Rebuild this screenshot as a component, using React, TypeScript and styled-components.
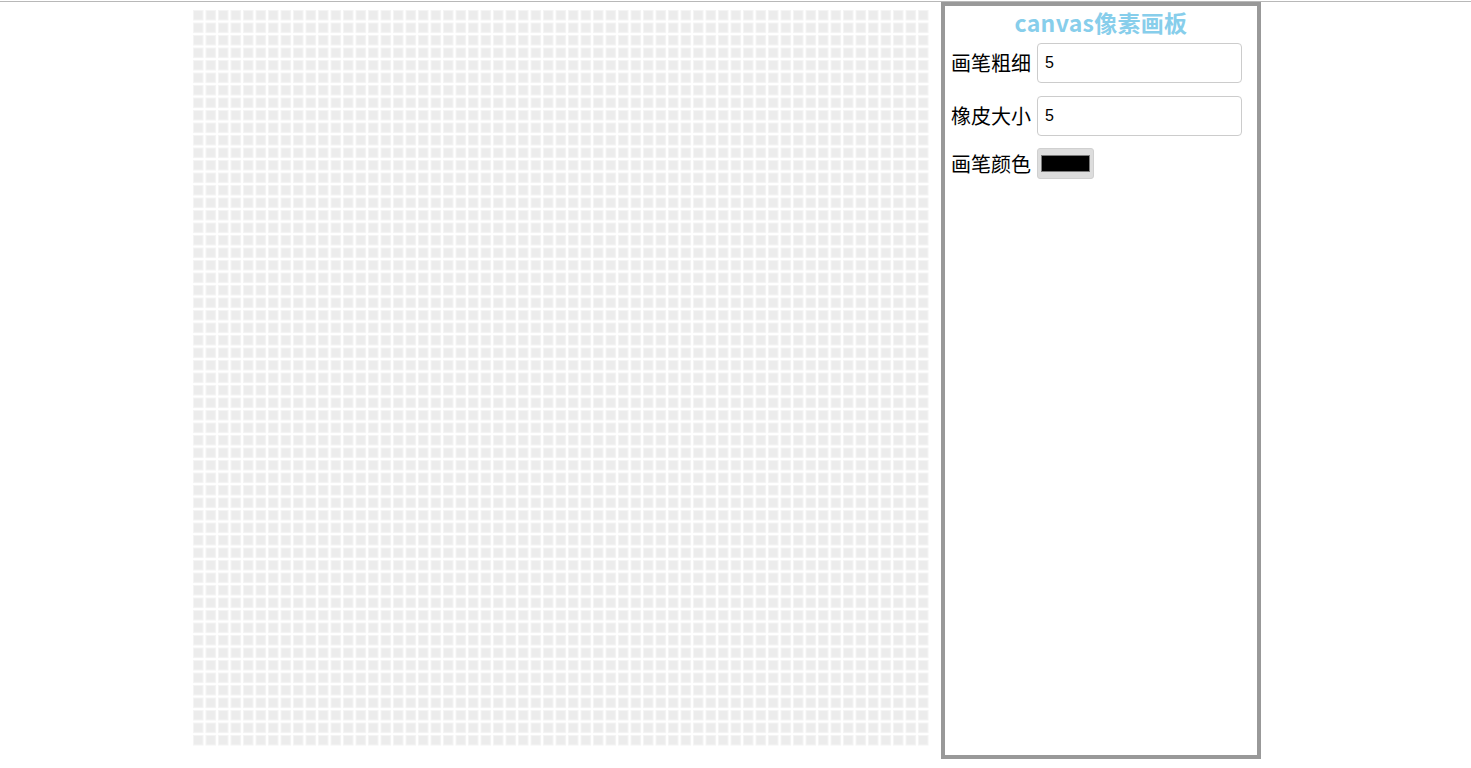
import React from 'react';
import styled, { createGlobalStyle } from 'styled-components';

const GlobalStyle = createGlobalStyle`
  html, body {
    margin: 0;
    padding: 0;
    background: #ffffff;
  }
  body {
    font-family: "Noto Sans CJK SC", "Noto Sans", sans-serif;
  }
`;

const Page = styled.div`
  margin-top: 1px;
  border-top: 1px solid #b8b8b8;
  display: flex;
  align-items: flex-start;
  padding-left: 193px;
  gap: 12px;
`;

const Board = styled.svg`
  display: block;
  margin-top: 8px;
  flex: none;
`;

const Panel = styled.aside`
  box-sizing: border-box;
  width: 320px;
  height: 757px;
  border: 4px solid #999999;
  padding: 0 6px;
  display: flex;
  flex-direction: column;
  flex: none;
`;

const Title = styled.h1`
  margin: 0 0 5px;
  text-align: center;
  font-size: 23px;
  line-height: 32px;
  font-weight: 700;
  color: #87ceeb;
  font-family: "Noto Sans CJK SC", sans-serif;
  letter-spacing: 0.3px;
`;

const Field = styled.label`
  display: flex;
  align-items: center;
  gap: 6px;
  margin-bottom: ${(p: { $gap?: number }) => p.$gap ?? 13}px;
`;

const Caption = styled.span`
  font-size: 20px;
  color: #000000;
  line-height: 24px;
  white-space: nowrap;
  font-family: "Noto Sans CJK SC", sans-serif;
  font-weight: 400;
`;

const NumberInput = styled.input`
  box-sizing: border-box;
  width: 205px;
  height: 40px;
  border: 1px solid #cccccc;
  border-radius: 4px;
  padding: 0 7px;
  font-size: 16px;
  font-family: "Liberation Sans", Arial, sans-serif;
  color: #000;
  outline: none;
`;

const ColorInput = styled.input`
  box-sizing: border-box;
  width: 57px;
  height: 31px;
  padding: 0;
  margin: 0;
  border: 1px solid #d0d0d0;
  border-radius: 3px;
  background: #dddddd;
  cursor: pointer;
  -webkit-appearance: none;
  appearance: none;

  &::-webkit-color-swatch-wrapper {
    padding: 6px 3px;
  }
  &::-webkit-color-swatch {
    border: 1px solid #7a7a7a;
    border-radius: 0;
  }
`;

const CELLS = 59;
const PITCH = 12.5;
const SIZE = 736;

const PixelBoard: React.FC = () => (
  <Board width={SIZE} height={SIZE} viewBox={`0 0 ${SIZE} ${SIZE}`}>
    <defs>
      <pattern id="cell" width={PITCH} height={PITCH} patternUnits="userSpaceOnUse">
        <rect x={0} y={0} width={10.5} height={10.5} fill="#f4f4f4" />
        <rect x={1} y={1} width={8.5} height={8.5} fill="#ececec" />
      </pattern>
    </defs>
    <rect x={0} y={0} width={CELLS * PITCH} height={CELLS * PITCH} fill="url(#cell)" />
  </Board>
);

const App: React.FC = () => {
  return (
    <>
      <GlobalStyle />
      <Page>
        <PixelBoard />
        <Panel>
          <Title>canvas像素画板</Title>
          <Field>
            <Caption>画笔粗细</Caption>
            <NumberInput type="number" defaultValue={5} />
          </Field>
          <Field $gap={12}>
            <Caption>橡皮大小</Caption>
            <NumberInput type="number" defaultValue={5} />
          </Field>
          <Field>
            <Caption>画笔颜色</Caption>
            <ColorInput type="color" defaultValue="#000000" />
          </Field>
        </Panel>
      </Page>
    </>
  );
};

export default App;
